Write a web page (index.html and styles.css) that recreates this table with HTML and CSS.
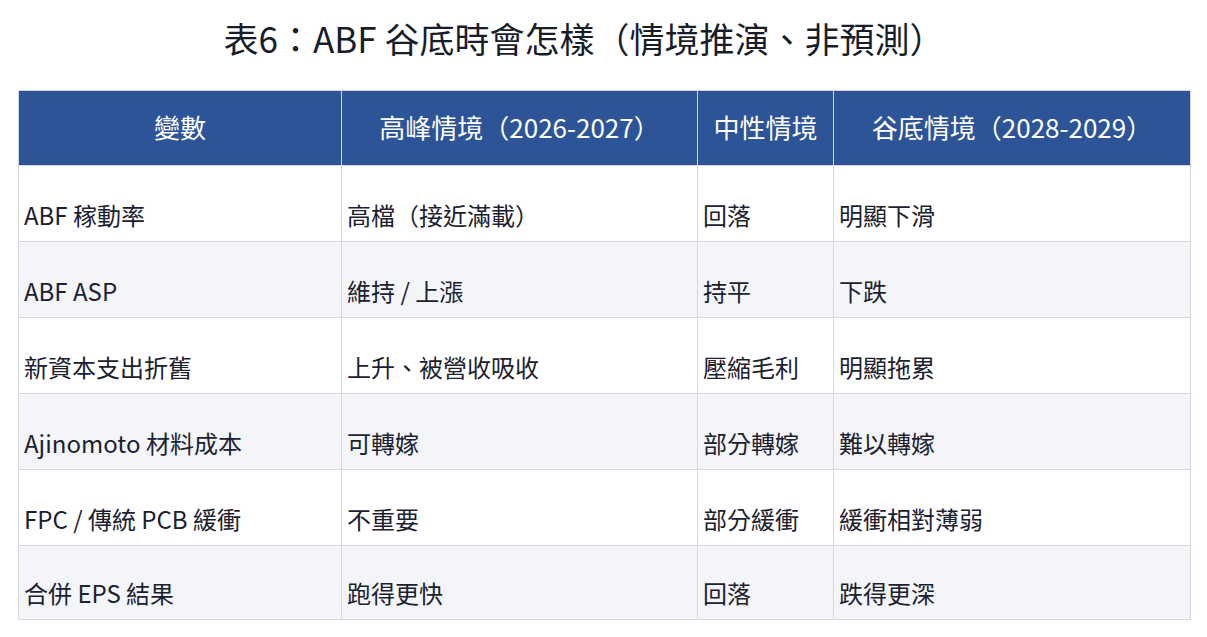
FILE: index.html
```html
<!DOCTYPE html>
<html lang="zh-Hant">
<head>
<meta charset="utf-8">
<link rel="stylesheet" href="styles.css">
</head>
<body>
<h1 class="title">表6：ABF 谷底時會怎樣（情境推演、非預測）</h1>
<table class="grid">
  <colgroup>
    <col class="c1"><col class="c2"><col class="c3"><col class="c4">
  </colgroup>
  <thead>
    <tr><th>變數</th><th>高峰情境（2026-2027）</th><th>中性情境</th><th>谷底情境（2028-2029）</th></tr>
  </thead>
  <tbody>
    <tr><td>ABF 稼動率</td><td>高檔（接近滿載）</td><td>回落</td><td>明顯下滑</td></tr>
    <tr><td>ABF ASP</td><td>維持 / 上漲</td><td>持平</td><td>下跌</td></tr>
    <tr><td>新資本支出折舊</td><td>上升、被營收吸收</td><td>壓縮毛利</td><td>明顯拖累</td></tr>
    <tr><td>Ajinomoto 材料成本</td><td>可轉嫁</td><td>部分轉嫁</td><td>難以轉嫁</td></tr>
    <tr><td>FPC / 傳統 PCB 緩衝</td><td>不重要</td><td>部分緩衝</td><td>緩衝相對薄弱</td></tr>
    <tr><td>合併 EPS 結果</td><td>跑得更快</td><td>回落</td><td>跌得更深</td></tr>
  </tbody>
</table>
</body>
</html>
```

FILE: styles.css
```css
html, body {
  margin: 0;
  padding: 0;
  background: #ffffff;
}
body {
  font-family: "Noto Sans CJK TC", "Noto Sans", sans-serif;
  color: #1b2130;
  padding: 0 17px 0 18px;
}
.title {
  margin: 0;
  height: 90px;
  box-sizing: border-box;
  padding: 15px 40px 0 0;
  font-size: 35px;
  line-height: 46px;
  font-weight: 400;
  text-align: center;
  color: #181d2a;
}
.grid {
  width: 1172px;
  border-collapse: collapse;
  table-layout: fixed;
}
.c1 { width: 323px; }
.c2 { width: 356px; }
.c3 { width: 136px; }
.c4 { width: 357px; }
.grid th {
  background: #2c5497;
  color: #ffffff;
  font-weight: 400;
  font-size: 26px;
  line-height: 36px;
  height: 71px;
  padding: 0 2px 3px;
  text-align: center;
  vertical-align: middle;
  border: 1px solid #d3d6de;
  white-space: nowrap;
}
.grid td {
  height: 76px;
  box-sizing: border-box;
  font-size: 24px;
  line-height: 34px;
  padding: 0 5px 9px 5px;
  vertical-align: bottom;
  border: 1px solid #d6d9e0;
  white-space: nowrap;
}
.grid tbody tr:nth-child(even) td {
  background: #f4f5f9;
}
.grid tbody tr:last-child td {
  height: 74px;
}
```
